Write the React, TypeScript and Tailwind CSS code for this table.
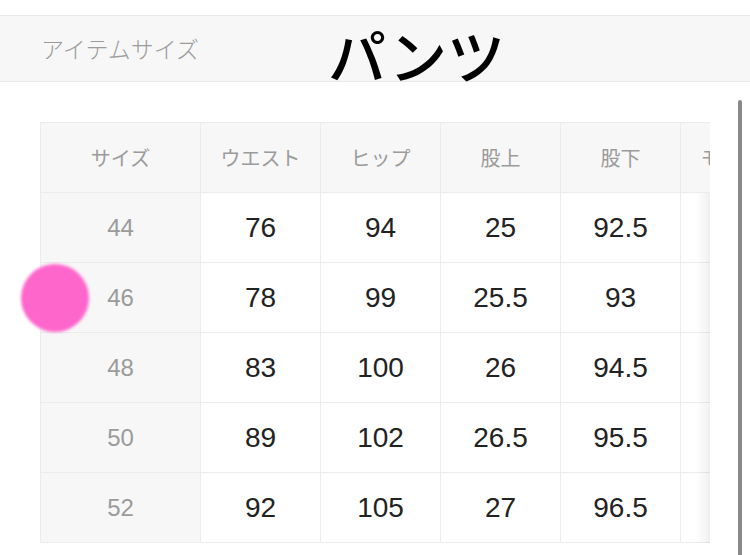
const heads = ["サイズ", "ウエスト", "ヒップ", "股上", "股下", "モモ周り"];

const rows = [
  ["44", "76", "94", "25", "92.5"],
  ["46", "78", "99", "25.5", "93"],
  ["48", "83", "100", "26", "94.5"],
  ["50", "89", "102", "26.5", "95.5"],
  ["52", "92", "105", "27", "96.5"],
];

const font = { fontFamily: '"Liberation Sans", "Noto Sans CJK JP", sans-serif' };
const jp = { fontFamily: '"Noto Sans CJK JP", sans-serif' };

export default function App() {
  return (
    <div className="relative h-[555px] w-[750px] overflow-hidden bg-white" style={font}>
      {/* Title bar */}
      <div className="mt-[15px] flex h-[67px] items-center border-y border-[#e9e9e9] bg-[#f7f7f7] pl-[41px]">
        <span className="text-[23px] font-light text-[#9b9b9b]" style={jp}>
          アイテムサイズ
        </span>
      </div>
      <div className="absolute left-[328px] top-[25px] text-[58px] font-medium leading-none text-black" style={jp}>
        パンツ
      </div>

      {/* Scrollbar */}
      <div className="absolute right-[8px] top-[100px] h-[470px] w-[4px] rounded-full bg-[#8a8a8a]" />

      {/* Size table */}
      <div className="relative ml-[40px] mt-[40px] w-[670px] overflow-hidden border-l border-t border-[#ececec]">
        <div className="grid w-[760px] grid-cols-[160px_repeat(5,120px)]">
          {heads.map((h) => (
            <div
              key={h}
              className="flex h-[70px] items-center justify-center border-b border-r border-[#ececec] bg-[#f7f7f7] text-[20px] text-[#9b9b9b]"
              style={jp}
            >
              {h}
            </div>
          ))}
          {rows.map((r) =>
            [...r, ""].map((v, i) => (
              <div
                key={r[0] + "-" + i}
                className={
                  i === 0
                    ? "flex h-[70px] items-center justify-center border-b border-r border-[#ececec] bg-[#f7f7f7] text-[24px] text-[#9b9b9b]"
                    : "flex h-[70px] items-center justify-center border-b border-r border-[#ececec] bg-white text-[28px] text-[#222]"
                }
              >
                {v}
              </div>
            ))
          )}
        </div>
        <div className="pointer-events-none absolute bottom-0 right-0 top-[70px] w-[14px] bg-gradient-to-r from-transparent to-black/[0.06]" />
      </div>

      {/* Pink marker */}
      <div className="absolute left-[21px] top-[264px] h-[68px] w-[68px] rounded-full bg-[#ff66cc] blur-[1.5px]" />
    </div>
  );
}
